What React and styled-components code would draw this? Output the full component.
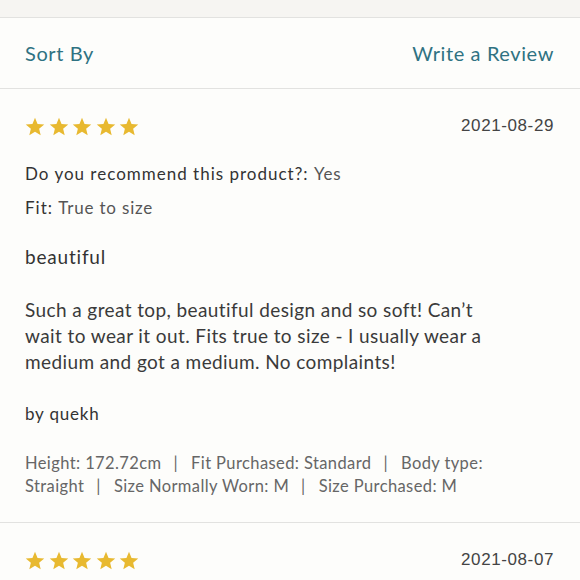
import React from 'react'
import styled, { createGlobalStyle } from 'styled-components'

const Global = createGlobalStyle`
  html, body {
    margin: 0;
    padding: 0;
    background: #fdfdfb;
  }
  body {
    font-family: Lato, "Open Sans", sans-serif;
    color: #333;
  }
`

const Page = styled.div`
  width: 580px;
  height: 580px;
  overflow: hidden;
  background: #fdfdfb;
`

const TopStrip = styled.div`
  height: 17px;
  background: #f6f5f2;
  border-bottom: 1.5px solid #e2e2e0;
`

const Toolbar = styled.div`
  height: 70px;
  display: flex;
  align-items: center;
  justify-content: space-between;
  padding: 0 26px 0 25px;
  border-bottom: 1.5px solid #e2e2e0;
`

const LinkButton = styled.a`
  font-size: 20px;
  color: #2f7282;
  letter-spacing: 0.6px;
  text-decoration: none;
`

const Review = styled.div`
  padding: 20px 26px 24px 25px;
  border-bottom: 1.5px solid #e2e2e0;
`

const TopRow = styled.div`
  display: flex;
  align-items: center;
  justify-content: space-between;
  height: 34px;
`

const Stars = styled.div`
  display: flex;
  gap: 3.5px;
`

const Star = () => (
  <svg width="20" height="19" viewBox="0 0 24 23">
    <path
      fill="#e8b930"
      d="M12 0.8l3.1 7.6 8.1 0.6-6.2 5.3 1.9 7.9L12 17.9l-6.9 4.3 1.9-7.9L0.8 9l8.1-0.6z"
    />
  </svg>
)

const DateText = styled.span`
  font-family: "Liberation Sans", Arial, sans-serif;
  font-size: 17px;
  letter-spacing: 0.6px;
  color: #444;
`

const Answer = styled.div`
  font-size: 17px;
  letter-spacing: 1px;
  color: #333;
  margin-top: ${p => p.$top}px;
  span {
    color: #555;
    letter-spacing: 0.8px;
  }
`

const Title = styled.div`
  font-size: 19px;
  letter-spacing: 0.8px;
  margin-top: 27px;
`

const Body = styled.p`
  max-width: 470px;
  font-size: 19px;
  line-height: 26px;
  color: #3a3a3a;
  letter-spacing: 0.4px;
  margin: 29px 0 0;
`

const Author = styled.div`
  font-size: 17px;
  letter-spacing: 0.8px;
  margin-top: 28px;
`

const Meta = styled.div`
  font-size: 16.5px;
  line-height: 23px;
  color: #666;
  letter-spacing: 0.4px;
  margin-top: 28px;
`

const Sep = styled.span`
  padding: 0 13px 0 12px;
`

const stars = [0, 1, 2, 3, 4]

const App = () => {
  return (
    <Page>
      <Global />
      <TopStrip />
      <Toolbar>
        <LinkButton href="#">Sort By</LinkButton>
        <LinkButton href="#">Write a Review</LinkButton>
      </Toolbar>
      <Review>
        <TopRow>
          <Stars>{stars.map(i => <Star key={i} />)}</Stars>
          <DateText>2021-08-29</DateText>
        </TopRow>
        <Answer $top={20}>Do you recommend this product?: <span>Yes</span></Answer>
        <Answer $top={13}>Fit: <span>True to size</span></Answer>
        <Title>beautiful</Title>
        <Body>
          Such a great top, beautiful design and so soft! Can’t wait to wear it out. Fits true to size - I usually wear a medium and got a medium. No complaints!
        </Body>
        <Author>by quekh</Author>
        <Meta>
          Height: 172.72cm<Sep>|</Sep>Fit Purchased: Standard<Sep>|</Sep>Body type: Straight<Sep>|</Sep>Size Normally Worn: M<Sep>|</Sep>Size Purchased: M
        </Meta>
      </Review>
      <Review>
        <TopRow>
          <Stars>{stars.map(i => <Star key={i} />)}</Stars>
          <DateText>2021-08-07</DateText>
        </TopRow>
      </Review>
    </Page>
  )
}

export default App
